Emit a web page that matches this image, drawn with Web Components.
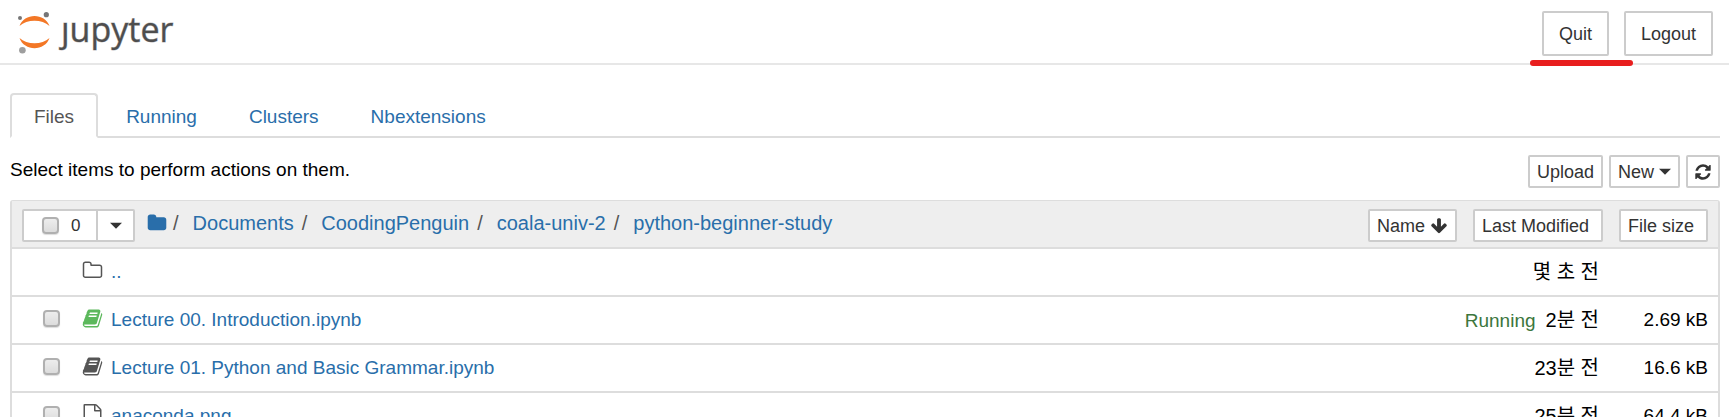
<!DOCTYPE html>
<html lang="ko">
<head>
<meta charset="utf-8">
<title>Home Page - Jupyter</title>
<style>
  html, body { margin: 0; height: 100%; overflow: hidden; background: #fff; }
  body {
    font-family: "Liberation Sans", "Noto Sans CJK KR", sans-serif;
    font-size: 19px; line-height: 28px; color: #000;
    --link: #296eaa; --line: #ddd; --edge: #ccc; --ink: #333;
  }
</style>
</head>
<body>
<nb-header>
  <nb-button size="large" class="quit">Quit</nb-button>
  <nb-button size="large">Logout</nb-button>
</nb-header>
<nb-page>
  <nb-tabs></nb-tabs>
  <nb-toolbar>
    Select items to perform actions on them.
    <nb-button slot="actions">Upload</nb-button>
    <nb-button slot="actions">New <nb-icon name="caret" size="12"></nb-icon></nb-button>
    <nb-button slot="actions" size="icon" label="Refresh"><nb-icon name="refresh" size="18"></nb-icon></nb-button>
  </nb-toolbar>
  <nb-files></nb-files>
</nb-page>

<script>
const ICONS = {
  caret: 'M0 420h1792L896 1316z',
  folder: 'M1728 608v704q0 92-66 158t-158 66h-1216q-92 0-158-66t-66-158v-960q0-92 66-158t158-66h320q92 0 158 66t66 158v32h672q92 0 158 66t66 158z',
  'folder-o': 'M1600 1312v-704q0-40-28-68t-68-28h-704q-40 0-68-28t-28-68v-64q0-40-28-68t-68-28h-320q-40 0-68 28t-28 68v960q0 40 28 68t68 28h1216q40 0 68-28t28-68zm128-704v704q0 92-66 158t-158 66h-1216q-92 0-158-66t-66-158v-960q0-92 66-158t158-66h320q92 0 158 66t66 158v32h672q92 0 158 66t66 158z',
  book: 'M1703 478q40 57 18 129l-275 906q-19 64-76.5 107.5t-122.5 43.5h-923q-77 0-148.5-53.5t-99.5-131.5q-24-67-2-127 0-4 3-27t4-37q1-8-3-21.5t-3-19.5q2-11 8-21t16.5-23.5 16.5-23.5q23-38 45-91.5t30-91.5q3-10 .5-30t-.5-28q3-11 17-28t17-23q21-36 42-92t25-90q1-9-2.5-32t.5-28q4-13 22-30.5t22-22.5q19-26 42.5-84.5t27.5-96.5q1-8-3-25.5t-2-26.5q2-8 9-18t18-23 17-21q8-12 16.5-30.5t15-35 16-36 19.5-32 26.5-23.5 36-11.5 47.5 5.5l-1 3q38-9 51-9h761q74 0 114 56t18 130l-274 906q-36 119-71.5 153.5t-128.5 34.5h-869q-27 0-38 15-11 16-1 43 24 70 144 70h923q29 0 56-15.5t35-41.5l300-987q7-22 5-57 38 15 59 43zm-1064 2q-4 13 2 22.5t20 9.5h608q13 0 25.5-9.5t16.5-22.5l21-64q4-13-2-22.5t-20-9.5h-608q-13 0-25.5 9.5t-16.5 22.5zm-83 256q-4 13 2 22.5t20 9.5h608q13 0 25.5-9.5t16.5-22.5l21-64q4-13-2-22.5t-20-9.5h-608q-13 0-25.5 9.5t-16.5 22.5z',
  file: 'M1596 380q28 28 48 76t20 88v1152q0 40-28 68t-68 28h-1344q-40 0-68-28t-28-68v-1600q0-40 28-68t68-28h896q40 0 88 20t76 48zm-444-244v376h376q-10-29-22-41l-313-313q-12-12-41-22zm384 1528v-1024h-416q-40 0-68-28t-28-68v-416h-768v1536h1280z',
  refresh: 'M1639 1056q0 5-1 7-64 268-268 434.5t-478 166.5q-146 0-282.5-55t-243.5-157l-129 129q-19 19-45 19t-45-19-19-45v-448q0-26 19-45t45-19h448q26 0 45 19t19 45-19 45l-137 137q71 66 161 102t187 36q134 0 250-65t186-179q11-17 53-117 8-23 30-23h192q13 0 22.5 9.5t9.5 22.5zm25-800v448q0 26-19 45t-45 19h-448q-26 0-45-19t-19-45 19-45l138-138q-148-137-349-137-134 0-250 65t-186 179q-11 17-53 117-8 23-30 23h-199q-13 0-22.5-9.5t-9.5-22.5v-7q65-268 270-434.5t480-166.5q146 0 284 55.5t245 156.5l130-129q19-19 45-19t45 19 19 45z',
  down: 'M1675 832q0 53-37 90l-651 652q-39 37-91 37-53 0-90-37l-651-652q-38-36-38-90 0-53 38-91l74-75q39-37 91-37 53 0 90 37l294 294v-704q0-52 38-90t90-38h128q52 0 90 38t38 90v704l294-294q37-37 90-37 52 0 91 37l75 75q37 39 37 91z'
};

const define = (name, render) => customElements.define(name, class extends HTMLElement {
  connectedCallback() {
    if (!this.shadowRoot) this.attachShadow({ mode: 'open' }).innerHTML = render(this);
  }
});

const CHECKBOX = `
  input[type=checkbox] {
    appearance: none; display: block; flex: none; box-sizing: border-box;
    width: 17px; height: 17px; margin: 0;
    border: 2px solid #b0b0b0; border-radius: 4px;
    background: linear-gradient(#ededed, #dcdcdc); box-shadow: 0 1px 1px #ddd;
  }`;

define('nb-icon', el => {
  const s = el.getAttribute('size');
  return `<style>:host { display: block; flex: none; } svg { display: block; }</style>
    <svg width="${s}" height="${s}" viewBox="0 0 1792 1792" fill="currentColor" aria-hidden="true"><path d="${ICONS[el.getAttribute('name')]}"/></svg>`;
});

define('nb-button', el => `
  <style>
    :host { display: block; }
    button {
      display: flex; align-items: center; gap: 5px; box-sizing: border-box; width: 100%;
      height: 33px; padding: 0 7px; margin: 0; border: 2px solid var(--edge); border-radius: 2px;
      background: #fff; color: var(--ink); font: inherit; font-size: 18px; line-height: 24px; white-space: nowrap;
    }
    :host([size=large]) button { height: 45px; padding: 0 15px; }
    :host([size=icon]) button { padding: 0 6px; }
  </style>
  <button type="button" ${el.hasAttribute('label') ? `aria-label="${el.getAttribute('label')}"` : ''}><slot></slot></button>`);

define('nb-header', () => `
  <style>
    :host { display: block; border-bottom: 2px solid #e7e7e7; }
    header { display: flex; justify-content: space-between; align-items: center; padding: 0 16px; height: 63px; }
    .logo { display: flex; align-items: flex-start; gap: 9px; color: #4e4e4e; text-decoration: none;
      font: 34px/42px "Open Sans", sans-serif; -webkit-text-stroke: 1px #4e4e4e66; }
    .logo svg { display: block; }
    nav { display: flex; gap: 15px; padding-top: 4px; }
    ::slotted(.quit) { position: relative; }
    ::slotted(.quit)::after {
      content: ""; position: absolute; left: -12px; right: -24px; top: 49px; height: 6px;
      border-radius: 3px; background: #e81e1e; z-index: 1;
    }
  </style>
  <header>
    <a class="logo" href="#" aria-label="Jupyter">
      <svg width="36" height="48" viewBox="16 8 36 48" aria-hidden="true">
        <path d="M19.500 26C24 12.500 45 12.500 49.500 26C42 19 27 19 19.500 26ZM19.500 38C24 51.500 45 51.500 49.500 38C42 45 27 45 19.500 38Z" fill="#f37726"/>
        <circle cx="20" cy="18" r="2" fill="#767677"/>
        <circle cx="46.300" cy="14.700" r="2.600" fill="#767677"/>
        <circle cx="22.400" cy="50.300" r="3.300" fill="#9e9e9e"/>
      </svg>
      <span>ȷupyter</span>
    </a>
    <nav><slot></slot></nav>
  </header>`);

define('nb-page', () => `
  <style>:host { display: block; padding: 28px 9px 0 10px; }</style>
  <slot></slot>`);

define('nb-tabs', () => `
  <style>
    :host { display: block; border-bottom: 2px solid var(--line); }
    nav { display: flex; gap: 4px; }
    a { box-sizing: border-box; height: 45px; padding: 8px 22px; margin-bottom: -2px; border: 2px solid transparent;
      border-radius: 4px 4px 0 0; color: var(--link); text-decoration: none; }
    a[aria-current] { background: #fff; color: #555; border-color: var(--line) var(--line) #fff; }
  </style>
  <nav>${['Files', 'Running', 'Clusters', 'Nbextensions'].map((t, i) =>
    `<a href="#" ${i ? '' : 'aria-current="page"'}>${t}</a>`).join('')}</nav>`);

define('nb-toolbar', () => `
  <style>
    :host { display: flex; justify-content: space-between; padding: 17px 0 12px; line-height: 30px; }
    .actions { display: flex; gap: 6px; }
  </style>
  <div><slot></slot></div>
  <div class="actions"><slot name="actions"></slot></div>`);

define('nb-selector', () => `
  <style>
    :host { display: flex; box-sizing: border-box; height: 33px; border: 2px solid var(--edge); border-radius: 2px;
      background: #fff; color: var(--ink); font-size: 17px; line-height: 29px; }
    label { display: flex; align-items: center; gap: 12px; width: 54px; padding-left: 18px; }
    button { display: flex; align-items: center; justify-content: center; width: 37px; padding: 0; margin: 0;
      border: 0; border-left: 2px solid var(--edge); background: none; color: inherit; }
    ${CHECKBOX}
  </style>
  <label><input type="checkbox" aria-label="Select all"><span>0</span></label>
  <button type="button" aria-label="Select by kind"><nb-icon name="caret" size="12"></nb-icon></button>`);

define('nb-breadcrumbs', () => `
  <style>
    :host { display: block; flex: 1; font-size: 20px; line-height: 28px; color: #555; }
    nav { display: flex; align-items: center; height: 28px; }
    a { color: var(--link); text-decoration: none; }
    .sep { padding: 0 14px 0 8px; }
    .home + .sep { padding-left: 6px; }
  </style>
  <nav><a class="home" href="#" aria-label="Home"><nb-icon name="folder" size="20"></nb-icon></a>${
    ['Documents', 'CoodingPenguin', 'coala-univ-2', 'python-beginner-study'].map(t =>
    `<span class="sep">/</span><a href="#">${t}</a>`).join('')}</nav>`);

const FILES = [
  { icon: 'folder-o', name: '..', time: '몇 초 전' },
  { icon: 'book', name: 'Lecture 00. Introduction.ipynb', running: true, time: '2분 전', size: '2.69 kB' },
  { icon: 'book', name: 'Lecture 01. Python and Basic Grammar.ipynb', time: '23분 전', size: '16.6 kB' },
  { icon: 'file', name: 'anaconda.png', time: '25분 전', size: '64.4 kB' }
];

define('nb-files', () => `
  <style>
    :host { display: block; border: 2px solid var(--line); border-top-width: 1px; border-radius: 3px; }
    .head { display: flex; align-items: flex-start; height: 38px; padding: 8px 10px 0;
      background: #eee; border-bottom: 2px solid var(--line); }
    nb-selector { margin-right: 12px; }
    .sort { display: flex; gap: 16px; }
    .modified { width: 130px; }
    .size { width: 89px; }
    table { width: 100%; border-collapse: collapse; table-layout: fixed; }
    td { height: 46px; padding: 0; border-bottom: 2px solid var(--line); white-space: nowrap; }
    .c-check { width: 70px; }
    .c-time { width: 240px; }
    .c-size { width: 119px; }
    .check { padding-left: 31px; }
    .check input[type=checkbox] { margin-bottom: 4px; }
    .name { display: flex; align-items: center; gap: 8px; }
    .name nb-icon { color: #555; margin-bottom: 4px; }
    .name nb-icon.on { color: #5cb85c; }
    a { color: var(--link); text-decoration: none; }
    .time, .bytes { text-align: right; }
    .time span:last-child { font-size: 20px; }
    .bytes { padding-right: 10px; }
    .running { color: #3c763d; margin-right: 10px; }
    ${CHECKBOX}
  </style>
  <div class="head">
    <nb-selector></nb-selector>
    <nb-breadcrumbs></nb-breadcrumbs>
    <div class="sort">
      <nb-button>Name <nb-icon name="down" size="18"></nb-icon></nb-button>
      <nb-button class="modified">Last Modified</nb-button>
      <nb-button class="size">File size</nb-button>
    </div>
  </div>
  <table aria-label="Files">
    <colgroup><col class="c-check"><col><col class="c-time"><col class="c-size"></colgroup>
    <tbody>${FILES.map(f => `
      <tr>
        <td class="check">${f.size ? `<input type="checkbox" aria-label="Select ${f.name}">` : ''}</td>
        <td><div class="name"><nb-icon name="${f.icon}" size="21" class="${f.running ? 'on' : ''}"></nb-icon><a href="#">${f.name}</a></div></td>
        <td class="time">${f.running ? '<span class="running">Running</span>' : ''}<span>${f.time}</span></td>
        <td class="bytes">${f.size || ''}</td>
      </tr>`).join('')}
    </tbody>
  </table>`);
</script>
</body>
</html>
